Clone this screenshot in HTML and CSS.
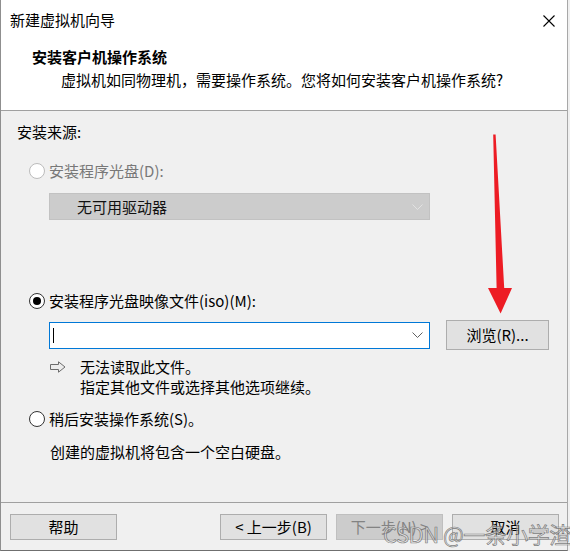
FILE: index.html
```html
<!DOCTYPE html>
<html lang="zh-CN">
<head>
<meta charset="utf-8">
<title>新建虚拟机向导</title>
<link rel="stylesheet" href="styles.css">
</head>
<body>
<div class="window">
  <div class="titlebar">
    <span class="title">新建虚拟机向导</span>
    <svg class="close" width="14" height="14" viewBox="0 0 14 14"><path d="M1.5 1.5 L12.5 12.5 M12.5 1.5 L1.5 12.5" stroke="#000" stroke-width="1.1" fill="none"/></svg>
  </div>
  <div class="header">
    <div class="h1">安装客户机操作系统</div>
    <div class="sub">虚拟机如同物理机，需要操作系统。您将如何安装客户机操作系统?</div>
  </div>
  <div class="content">
    <div class="line src">安装来源:</div>

    <div class="line radio-row r1 disabled">
      <span class="radio radio-disabled"></span>
      <span class="rlabel">安装程序光盘(D):</span>
    </div>
    <div class="select select-disabled">
      <span class="select-text">无可用驱动器</span>
      <svg class="chev" width="11" height="6" viewBox="0 0 11 6"><path d="M0.5 0.5 L5.5 5.5 L10.5 0.5" stroke="#e2e2e2" stroke-width="1" fill="none"/></svg>
    </div>

    <div class="line radio-row r2">
      <span class="radio radio-checked"><span class="dot"></span></span>
      <span class="rlabel">安装程序光盘映像文件(iso)(M):</span>
    </div>
    <div class="iso-row">
      <div class="select select-active">
        <span class="caret"></span>
        <svg class="chev" width="11" height="6" viewBox="0 0 11 6"><path d="M0.5 0.5 L5.5 5.5 L10.5 0.5" stroke="#606060" stroke-width="1" fill="none"/></svg>
      </div>
      <button class="btn browse">浏览(R)...</button>
    </div>
    <div class="line msg m1">
      <svg class="hint" width="16" height="12" viewBox="0 0 16 12"><path d="M0.5 3.5 H8.5 V0.8 L15 6 L8.5 11.2 V8.5 H0.5 Z" stroke="#6c6c6c" stroke-width="1" fill="#ececec" stroke-linejoin="miter"/></svg>
      <span class="msg-text">无法读取此文件。</span>
    </div>
    <div class="line msg m2">
      <span class="msg-text">指定其他文件或选择其他选项继续。</span>
    </div>

    <div class="line radio-row r3">
      <span class="radio"></span>
      <span class="rlabel">稍后安装操作系统(S)。</span>
    </div>
    <div class="line note">创建的虚拟机将包含一个空白硬盘。</div>
  </div>
  <div class="footer">
    <button class="btn">帮助</button>
    <div class="spacer"></div>
    <button class="btn">&lt; 上一步(B)</button>
    <button class="btn btn-disabled">下一步(N) &gt;</button>
    <button class="btn">取消</button>
  </div>
  <div class="watermark">CSDN @一条小学渣</div>
  <svg class="annot" width="570" height="551" viewBox="0 0 570 551">
    <polygon points="493.2,134.5 495.6,134.5 504.2,288 512,288 500.6,313.5 488,288 496.6,288" fill="#ed1c24"/>
  </svg>
</div>
</body>
</html>
```
FILE: styles.css
```css
* { box-sizing: border-box; }
html, body {
  margin: 0;
  padding: 0;
  background: #f0f0f0;
}
body {
  width: 570px;
  height: 551px;
  overflow: hidden;
  font-family: "Noto Sans CJK SC", "Noto Sans", sans-serif;
  font-size: 15px;
  color: #000;
}
.window {
  position: relative;
  width: 568px;
  height: 551px;
  border-left: 1px solid #8f8f8f;
  border-right: 1px solid #a8a8a8;
  border-bottom: 1px solid #6f6f6f;
  background: #f0f0f0;
}
.titlebar {
  height: 40px;
  background: #fff;
  display: flex;
  align-items: center;
  padding-left: 9px;
  padding-right: 10px;
}
.title {
  line-height: 20px;
  flex: 1;
}
.close {
  display: block;
  margin-top: 1px;
  margin-right: 1px;
}
.header {
  height: 71px;
  background: #fff;
  border-bottom: 1px solid #a0a0a0;
  padding-top: 7px;
}
.h1 {
  font-weight: 700;
  line-height: 20px;
  padding-left: 31px;
}
.sub {
  line-height: 20px;
  margin-top: 3px;
  padding-left: 60px;
}
.content {
  height: 392px;
  border-bottom: 1px solid #a0a0a0;
  padding-left: 16px;
  padding-top: 11px;
}
.line {
  height: 20px;
  line-height: 20px;
  display: flex;
  align-items: center;
}
.radio-row { margin-left: 12px; }
.r1 { margin-top: 19px; }
.r2 { margin-top: 71px; }
.r3 { margin-top: 12px; }
.radio {
  width: 16px;
  height: 16px;
  border-radius: 50%;
  border: 1px solid #333;
  background: #fff;
  display: flex;
  align-items: center;
  justify-content: center;
  flex: none;
}
.radio-disabled { border-color: #bcbcbc; }
.radio-checked { border-color: #333; }
.dot {
  width: 8px;
  height: 8px;
  border-radius: 50%;
  background: #000;
}
.rlabel { margin-left: 4px; }
.disabled .rlabel { color: #787878; }
.select {
  width: 381px;
  height: 27px;
  margin-left: 32px;
  display: flex;
  align-items: center;
  position: relative;
}
.select-disabled {
  margin-top: 12px;
  background: #cccccc;
  border: 1px solid #c2c2c2;
}
.select-text {
  margin-left: 27px;
  line-height: 20px;
  color: #111;
}
.chev {
  display: block;
  margin-left: auto;
  margin-right: 6px;
}
.select-active {
  margin-left: 0;
  background: #fff;
  border: 1px solid #0078d7;
}
.caret {
  width: 1px;
  height: 15px;
  background: #000;
  margin-left: 3px;
}
.iso-row {
  margin-top: 9px;
  margin-left: 32px;
  height: 30px;
  display: flex;
  align-items: center;
  gap: 16px;
}
.btn {
  font-family: inherit;
  font-size: 15px;
  color: #000;
  background: #e1e1e1;
  border: 1px solid #adadad;
  border-radius: 0;
  padding: 0;
  margin: 0;
  line-height: 20px;
  height: 26px;
  width: 107px;
  display: flex;
  align-items: center;
  justify-content: center;
}
.browse {
  width: 103px;
  height: 30px;
}
.msg { margin-left: 33px; }
.m1 { margin-top: 7px; }
.hint {
  display: block;
  flex: none;
}
.msg-text { margin-left: 14px; }
.m2 .msg-text { margin-left: 30px; }
.note {
  margin-top: 13px;
  margin-left: 33px;
}
.footer {
  height: 47px;
  padding-top: 11px;
  padding-left: 9px;
  padding-right: 8px;
  display: flex;
  align-items: flex-start;
  gap: 9px;
}
.spacer { flex: 1; }
.btn-disabled {
  background: #cccccc;
  border-color: #bfbfbf;
  color: #838383;
}
.watermark {
  position: absolute;
  left: 382px;
  top: 519px;
  font-size: 22px;
  line-height: 28px;
  color: rgba(225, 225, 225, 0.6);
  -webkit-text-stroke: 0.7px rgba(95, 95, 95, 0.8);
  white-space: nowrap;
  letter-spacing: -0.5px;
}
.annot {
  position: absolute;
  left: -1px;
  top: 0;
  pointer-events: none;
}
```
